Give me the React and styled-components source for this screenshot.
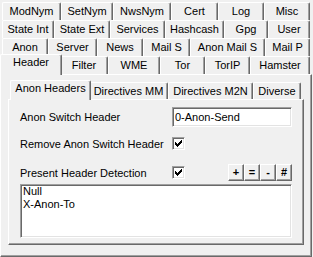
import React from "react";
import styled, { createGlobalStyle } from "styled-components";

const GlobalStyle = createGlobalStyle`
  html, body {
    margin: 0;
    padding: 0;
    background: #f0f0f0;
  }
  body {
    font-family: "Liberation Sans", Arial, sans-serif;
    font-size: 11px;
    color: #000;
  }
`;

const Window = styled.div`
  width: 313px;
  height: 257px;
  background: #f0f0f0;
  overflow: hidden;
`;

const TabStrip = styled.div`
  display: flex;
  flex-direction: column;
  padding: ${(p) => p.$top}px 0 0 ${(p) => p.$left}px;
`;

const TabRow = styled.div`
  display: flex;
  align-items: flex-start;
  height: ${(p) => p.$h}px;
`;

const Tab = styled.div`
  box-sizing: border-box;
  flex: none;
  width: ${(p) => p.$w + (p.$active ? 4 : 0)}px;
  height: ${(p) => (p.$active ? p.$h + 3 : p.$h)}px;
  margin: ${(p) => (p.$active ? "-2px -2px 0" : "0")};
  padding-top: ${(p) => (p.$active ? 0 : 1)}px;
  position: relative;
  z-index: ${(p) => (p.$active ? 2 : 0)};
  background: #f0f0f0;
  border-top: 1px solid #fff;
  border-left: 1px solid #fff;
  border-right: 1px solid #696969;
  border-radius: 2px 2px 0 0;
  box-shadow: inset -1px 0 #a0a0a0;
  line-height: 14px;
  text-align: center;
  white-space: nowrap;
`;

const Panel = styled.div`
  box-sizing: border-box;
  width: ${(p) => p.$w}px;
  height: ${(p) => p.$h}px;
  border-top: 1px solid #fff;
  border-left: 1px solid #fff;
  border-right: 1px solid #696969;
  border-bottom: 1px solid #696969;
  box-shadow: inset -1px -1px #a0a0a0;
  padding: ${(p) => p.$pad};
`;

const Form = styled.div`
  width: 272px;
  display: flex;
  flex-direction: column;
`;

const Field = styled.div`
  display: flex;
  align-items: center;
  height: ${(p) => p.$h}px;
  margin-top: ${(p) => p.$mt || 0}px;
`;

const Label = styled.span`
  flex: none;
  width: 152px;
  white-space: nowrap;
`;

const sunken = `
  box-sizing: border-box;
  background: #fff;
  border: 1px solid;
  border-color: #a0a0a0 #fff #fff #a0a0a0;
  box-shadow: inset 1px 1px #696969, inset -1px -1px #e3e3e3;
`;

const TextBox = styled.input`
  ${sunken}
  width: 120px;
  height: 20px;
  margin: 0;
  padding: 0 2px;
  font: 11px "Liberation Sans", Arial, sans-serif;
  color: #000;
  outline: none;
`;

const CheckBox = styled.div`
  ${sunken}
  flex: none;
  width: 13px;
  height: 13px;
  display: flex;
  align-items: center;
  justify-content: center;
`;

const ButtonGroup = styled.div`
  display: flex;
  margin-left: auto;
`;

const SmallButton = styled.div`
  box-sizing: border-box;
  width: 16px;
  height: 17px;
  border: 1px solid;
  border-color: #fff #696969 #696969 #fff;
  box-shadow: inset -1px -1px #a0a0a0;
  background: #f0f0f0;
  display: flex;
  align-items: center;
  justify-content: center;
  font-weight: bold;
  line-height: 1;
`;

const ListBox = styled.div`
  ${sunken}
  width: 272px;
  height: 54px;
  margin-top: 3px;
  padding: 0 2px;
  line-height: 13px;
`;

const checkPixels = [
  [6, 0], [5, 1], [6, 1], [0, 2], [4, 2], [5, 2], [6, 2],
  [0, 3], [1, 3], [3, 3], [4, 3], [5, 3],
  [0, 4], [1, 4], [2, 4], [3, 4], [4, 4],
  [1, 5], [2, 5], [3, 5], [2, 6],
];

function Check() {
  return (
    <svg width="7" height="7" viewBox="0 0 7 7" shapeRendering="crispEdges">
      {checkPixels.map(([x, y]) => (
        <rect key={`${x}-${y}`} x={x} y={y} width="1" height="1" fill="#000" />
      ))}
    </svg>
  );
}

const outerRows = [
  [["ModNym", 59], ["SetNym", 52], ["NwsNym", 58], ["Cert", 47], ["Log", 46], ["Misc", 46]],
  [["State Int", 52], ["State Ext", 56], ["Services", 55], ["Hashcash", 59], ["Gpg", 44], ["User", 42]],
  [["Anon", 46], ["Server", 49], ["News", 46], ["Mail S", 47], ["Anon Mail S", 75], ["Mail P", 45]],
  [["Header", 58, true], ["Filter", 48], ["WME", 52], ["Tor", 45], ["TorIP", 45], ["Hamster", 60]],
];

const innerTabs = [
  ["Anon Headers", 77, true],
  ["Directives MM", 79],
  ["Directives M2N", 85],
  ["Diverse", 48],
];

export default function App() {
  return (
    <>
      <GlobalStyle />
      <Window>
        <TabStrip $top={2} $left={2}>
          {outerRows.map((row, i) => (
            <TabRow key={i} $h={18}>
              {row.map(([name, w, active]) => (
                <Tab key={name} $w={w} $h={18} $active={active}>
                  {name}
                </Tab>
              ))}
            </TabRow>
          ))}
        </TabStrip>
        <Panel $w={312} $h={183} $pad="7px 7px 0 7px">
          <TabStrip $top={0} $left={4}>
            <TabRow $h={17}>
              {innerTabs.map(([name, w, active]) => (
                <Tab key={name} $w={w} $h={17} $active={active}>
                  {name}
                </Tab>
              ))}
            </TabRow>
          </TabStrip>
          <Panel $w={296} $h={146} $pad="7px 0 0 11px">
            <Form>
              <Field $h={20}>
                <Label>Anon Switch Header</Label>
                <TextBox defaultValue="0-Anon-Send" readOnly />
              </Field>
              <Field $h={13} $mt={10}>
                <Label>Remove Anon Switch Header</Label>
                <CheckBox>
                  <Check />
                </CheckBox>
              </Field>
              <Field $h={17} $mt={14}>
                <Label>Present Header Detection</Label>
                <CheckBox>
                  <Check />
                </CheckBox>
                <ButtonGroup>
                  <SmallButton>+</SmallButton>
                  <SmallButton>=</SmallButton>
                  <SmallButton>-</SmallButton>
                  <SmallButton>#</SmallButton>
                </ButtonGroup>
              </Field>
              <ListBox>
                <div>Null</div>
                <div>X-Anon-To</div>
              </ListBox>
            </Form>
          </Panel>
        </Panel>
      </Window>
    </>
  );
}
